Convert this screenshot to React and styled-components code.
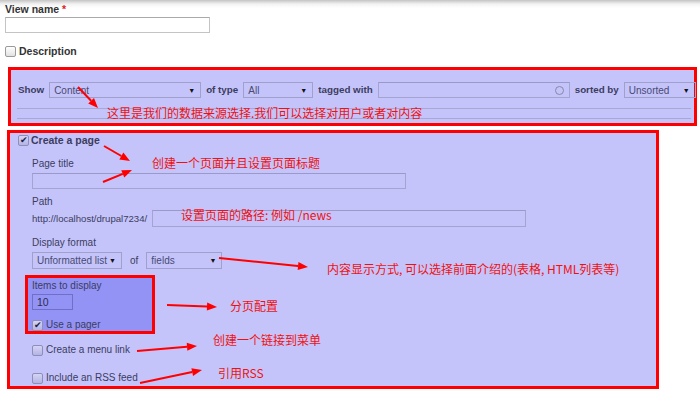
import React from "react";
import styled, { createGlobalStyle } from "styled-components";

const Global = createGlobalStyle`
    body {
        margin: 0;
        background: #fff;
    }
`;

const Page = styled.div`
    position: relative;
    width: 700px;
    height: 395px;
    overflow: hidden;
    padding: 3px 0 0 5px;
    box-sizing: border-box;
    background: linear-gradient(to bottom, #c4c4c4 0px, #f2f2f2 4px, #fff 8px);
    font-family: "Liberation Sans", Arial, sans-serif;
    color: #333;
`;

const Label = styled.div`
    font-size: ${(p) => p.$fs || (p.$bold ? 10.5 : 10)}px;
    font-weight: ${(p) => (p.$bold ? "bold" : "normal")};
    line-height: 12px;
    white-space: nowrap;
    flex: none;
    margin-top: ${(p) => p.$mt || 0}px;
    color: ${(p) => (p.$tinted ? "#3c3c5e" : "#333")};
`;

const Star = styled.span`
    color: #d22;
`;

const TextInput = styled.div`
    box-sizing: border-box;
    flex: none;
    width: ${(p) => p.$w}px;
    height: ${(p) => p.$h || 16}px;
    margin-top: ${(p) => p.$mt || 0}px;
    border: 1px solid ${(p) => p.$border || (p.$tinted ? "#a4a4d2" : "#c4c4c4")};
    border-top-color: ${(p) => p.$border || (p.$tinted ? "#9a9ac8" : "#aaa")};
    background: ${(p) => (p.$tinted ? "transparent" : "#fff")};
    font-size: 10.5px;
    line-height: 13px;
    padding: 0 4px;
    color: #2c2c4c;
    display: flex;
    align-items: center;
    justify-content: space-between;
`;

const Ring = styled.span`
    width: 7px;
    height: 7px;
    border: 1px solid #8888aa;
    border-radius: 50%;
    margin-right: 1px;
`;

const Select = styled.div`
    box-sizing: border-box;
    flex: none;
    width: ${(p) => p.$w}px;
    height: ${(p) => p.$h || 16}px;
    border: 1px solid #a0a0cc;
    padding: 0 5px 0 4px;
    display: flex;
    align-items: center;
    justify-content: space-between;
    white-space: nowrap;
    font-size: 10px;
    color: #4a4a72;
    &::after {
        content: "▼";
        font-size: 7px;
        color: #111;
    }
`;

const Row = styled.div`
    display: flex;
    align-items: center;
    gap: ${(p) => p.$gap || 6}px;
    margin-top: ${(p) => p.$mt || 0}px;
    margin-left: ${(p) => p.$ml || 0}px;
`;

const Box = styled.div`
    box-sizing: border-box;
    width: ${(p) => p.$w}px;
    height: ${(p) => p.$h}px;
    margin-top: ${(p) => p.$mt}px;
    margin-left: ${(p) => p.$ml}px;
    border: 3px solid #ff0000;
    background: ${(p) => p.$bg};
    padding: ${(p) => p.$pad};
`;

const Divider = styled.div`
    height: 1px;
    margin: 0 -1px;
    background: #a8a8d4;
    margin-top: ${(p) => p.$mt}px;
`;

const Check = styled.span`
    box-sizing: border-box;
    width: 11px;
    height: 11px;
    flex: none;
    border: 1px solid ${(p) => (p.$tinted ? "#8e8eb8" : "#9a9a9a")};
    border-radius: 2px;
    background: ${(p) =>
        p.$tinted ? "linear-gradient(#d4d4f6, #b4b4e4)" : "linear-gradient(#fff, #e2e2e2)"};
    display: flex;
    align-items: center;
    justify-content: center;
    font-size: 9px;
    line-height: 9px;
    color: #222244;
`;

const Indent = styled.div`
    margin-left: 14px;
`;

const Note = styled.div`
    position: absolute;
    left: ${(p) => p.$x}px;
    top: ${(p) => p.$y}px;
    font-family: "Noto Sans CJK SC", "DejaVu Sans", sans-serif;
    font-size: 12px;
    line-height: 14px;
    color: #f01010;
    white-space: nowrap;
`;

const Arrows = styled.svg`
    position: absolute;
    left: 0;
    top: 0;
    pointer-events: none;
`;

const arrows = [
    [78, 87, 98, 108],
    [104, 146, 130, 161],
    [103, 182, 132, 170],
    [219, 258, 308, 267],
    [167, 305, 217, 307],
    [137, 351, 197, 346],
    [140, 383, 202, 370],
];

function Arrow({ x1, y1, x2, y2 }) {
    const a = Math.atan2(y2 - y1, x2 - x1);
    const len = 10;
    const w = 4;
    const bx = x2 - len * Math.cos(a);
    const by = y2 - len * Math.sin(a);
    const px = -Math.sin(a) * w;
    const py = Math.cos(a) * w;
    return (
        <g>
            <line x1={x1} y1={y1} x2={bx} y2={by} stroke="#f00" strokeWidth="2" />
            <polygon
                points={`${x2},${y2} ${bx + px},${by + py} ${bx - px},${by - py}`}
                fill="#f00"
            />
        </g>
    );
}

export default function App() {
    return (
        <Page>
            <Global />
            <Label $bold>
                View name <Star>*</Star>
            </Label>
            <TextInput $w={205} $h={16} $mt={2} />
            <Row $mt={12} $gap={3}>
                <Check />
                <Label $bold>Description</Label>
            </Row>

            <Box $w={689} $h={59} $mt={10} $ml={3} $bg="#c4c4fb" $pad="12px 4px 0 7px">
                <Row $gap={5}>
                    <Label $bold $tinted $fs={9.8}>Show</Label>
                    <Select $w={152}>Content</Select>
                    <Label $bold $tinted $fs={9.8}>of type</Label>
                    <Select $w={70}>All</Select>
                    <Label $bold $tinted $fs={9.8}>tagged with</Label>
                    <TextInput $tinted $w={192}>
                        <span />
                        <Ring />
                    </TextInput>
                    <Label $bold $tinted $fs={9.8}>sorted by</Label>
                    <Select $w={72}>Unsorted</Select>
                </Row>
                <Divider $mt={10} />
                <Divider $mt={9} />
            </Box>

            <Box $w={652} $h={259} $mt={4} $ml={2} $bg="#c4c4fb" $pad="1px 0 0 8px">
                <Row $gap={2}>
                    <Check $tinted>✔</Check>
                    <Label $bold $tinted>Create a page</Label>
                </Row>
                <Indent>
                    <Label $tinted $mt={12}>Page title</Label>
                    <TextInput $tinted $w={374} $mt={3} />
                    <Label $tinted $mt={7}>Path</Label>
                    <Row $gap={5} $mt={2}>
                        <Label $tinted $fs={9.6}>http://localhost/drupal7234/</Label>
                        <TextInput $tinted $w={374} $h={17} />
                    </Row>
                    <Label $tinted $mt={10}>Display format</Label>
                    <Row $gap={8} $mt={3}>
                        <Select $w={90} $h={17}>Unformatted list</Select>
                        <Label $tinted>of</Label>
                        <Select $w={76} $h={17}>fields</Select>
                    </Row>
                </Indent>
                <Box $w={130} $h={59} $mt={6} $ml={7} $bg="#9393f6" $pad="2px 0 0 4px">
                    <Label $tinted>Items to display</Label>
                    <TextInput $tinted $w={41} $mt={2} $border="#6f6fc8">
                        10
                    </TextInput>
                    <Row $gap={3} $mt={9}>
                        <Check $tinted>✔</Check>
                        <Label $tinted>Use a pager</Label>
                    </Row>
                </Box>
                <Indent>
                    <Row $gap={3} $mt={10}>
                        <Check $tinted />
                        <Label $tinted>Create a menu link</Label>
                    </Row>
                    <Row $gap={3} $mt={16}>
                        <Check $tinted />
                        <Label $tinted>Include an RSS feed</Label>
                    </Row>
                </Indent>
            </Box>

            <Arrows width="700" height="395">
                {arrows.map(([x1, y1, x2, y2], i) => (
                    <Arrow key={i} x1={x1} y1={y1} x2={x2} y2={y2} />
                ))}
            </Arrows>

            <Note $x={107} $y={106}>这里是我们的数据来源选择.我们可以选择对用户或者对内容</Note>
            <Note $x={152} $y={156}>创建一个页面并且设置页面标题</Note>
            <Note $x={181} $y={208}>设置页面的路径: 例如 /news</Note>
            <Note $x={327} $y={262}>内容显示方式, 可以选择前面介绍的(表格, HTML列表等)</Note>
            <Note $x={230} $y={299}>分页配置</Note>
            <Note $x={213} $y={333}>创建一个链接到菜单</Note>
            <Note $x={218} $y={366}>引用RSS</Note>
        </Page>
    );
}
